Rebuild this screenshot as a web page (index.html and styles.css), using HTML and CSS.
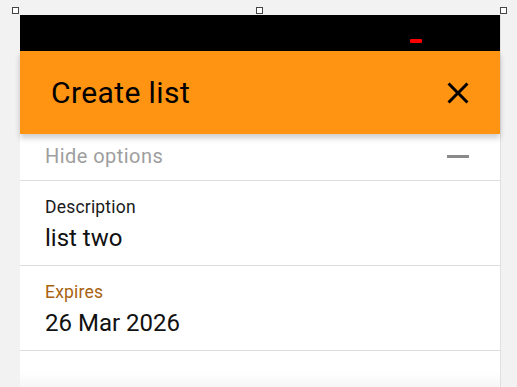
FILE: index.html
```html
<!DOCTYPE html>
<html lang="en">
<head>
    <meta charset="UTF-8">
    <meta name="viewport" content="width=device-width, initial-scale=1.0">
    <title>Create list</title>
    <link rel="stylesheet" href="styles.css">
</head>
<body>
    <div class="stage">
        <span class="handle handle-left"></span>
        <span class="handle handle-mid"></span>
        <span class="handle handle-right"></span>

        <div class="frame">
            <div class="status-bar">
                <span class="status-dot"></span>
            </div>

            <div class="dialog-header">
                <h1>Create list</h1>
                <button class="close-btn" aria-label="Close">
                    <svg viewBox="0 0 24 24">
                        <path d="M19 6.41L17.59 5 12 10.59 6.41 5 5 6.41 10.59 12 5 17.59 6.41 19 12 13.41 17.59 19 19 17.59 13.41 12z" fill="#000"/>
                    </svg>
                </button>
            </div>

            <div class="dialog-body">
                <div class="row options-row">
                    <span class="options-text">Hide options</span>
                    <span class="minus"></span>
                </div>
                <div class="row field">
                    <div class="field-label">Description</div>
                    <div class="field-value">list two</div>
                </div>
                <div class="row field">
                    <div class="field-label accent">Expires</div>
                    <div class="field-value">26 Mar 2026</div>
                </div>
                <div class="row empty-row"></div>
            </div>
        </div>
    </div>
</body>
</html>
```

FILE: styles.css
```css
body {
    margin: 0;
    background-color: #f2f2f2;
    font-family: Roboto, "Noto Sans", Arial, sans-serif;
    overflow: hidden;
}

.stage {
    position: relative;
    padding: 15px 17px 0 20px;
    height: 372px;
}

.handle {
    position: absolute;
    top: 7px;
    width: 5px;
    height: 5px;
    border: 1px solid #444;
    background-color: #fff;
}

.handle-left {
    left: 12px;
}

.handle-mid {
    left: 256px;
}

.handle-right {
    left: 500px;
}

.frame {
    width: 480px;
    height: 100%;
    display: flex;
    flex-direction: column;
    background-color: #fff;
    border-right: 1px solid #e0e0e0;
}

.status-bar {
    height: 36px;
    background-color: #000;
    position: relative;
}

.status-dot {
    position: absolute;
    left: 390px;
    top: 24px;
    width: 12px;
    height: 4px;
    border-radius: 1px;
    background-color: #ff0000;
}

.dialog-header {
    height: 83px;
    background-color: #ff9312;
    display: flex;
    align-items: center;
    justify-content: space-between;
    padding: 0 31px 0 31px;
    box-shadow: 0 4px 6px rgba(0, 0, 0, 0.2);
    position: relative;
    z-index: 1;
}

.dialog-header h1 {
    margin: 0;
    font-size: 30px;
    font-weight: 400;
    letter-spacing: 0.4px;
    color: #000;
}

.close-btn {
    border: none;
    background: none;
    padding: 0;
    width: 22px;
    height: 22px;
    cursor: pointer;
}

.close-btn svg {
    display: block;
    width: 36px;
    height: 36px;
    margin: -7px;
}

.dialog-body {
    flex: 1;
    display: flex;
    flex-direction: column;
    background: linear-gradient(to bottom, #fff 94%, #f6f6f6 100%);
}

.row {
    border-bottom: 1px solid #dedede;
    padding: 0 25px;
}

.options-row {
    height: 46px;
    display: flex;
    align-items: center;
    justify-content: space-between;
    padding-right: 31px;
}

.options-text {
    font-size: 20px;
    letter-spacing: 0.45px;
    color: #9e9e9e;
    margin-top: -2px;
}

.minus {
    width: 22px;
    height: 3px;
    background-color: #8a8a8a;
    margin-top: -2px;
}

.field {
    height: 85px;
    box-sizing: border-box;
    padding-top: 15px;
}

.field-label {
    font-size: 17.5px;
    letter-spacing: 0.2px;
    color: #1a1a1a;
    line-height: 22px;
}

.field-label.accent {
    color: #a8620f;
}

.field-value {
    font-size: 24px;
    color: #111;
    line-height: 32px;
    margin-top: 4px;
}

.empty-row {
    border-bottom: none;
    flex: 1;
}
```
